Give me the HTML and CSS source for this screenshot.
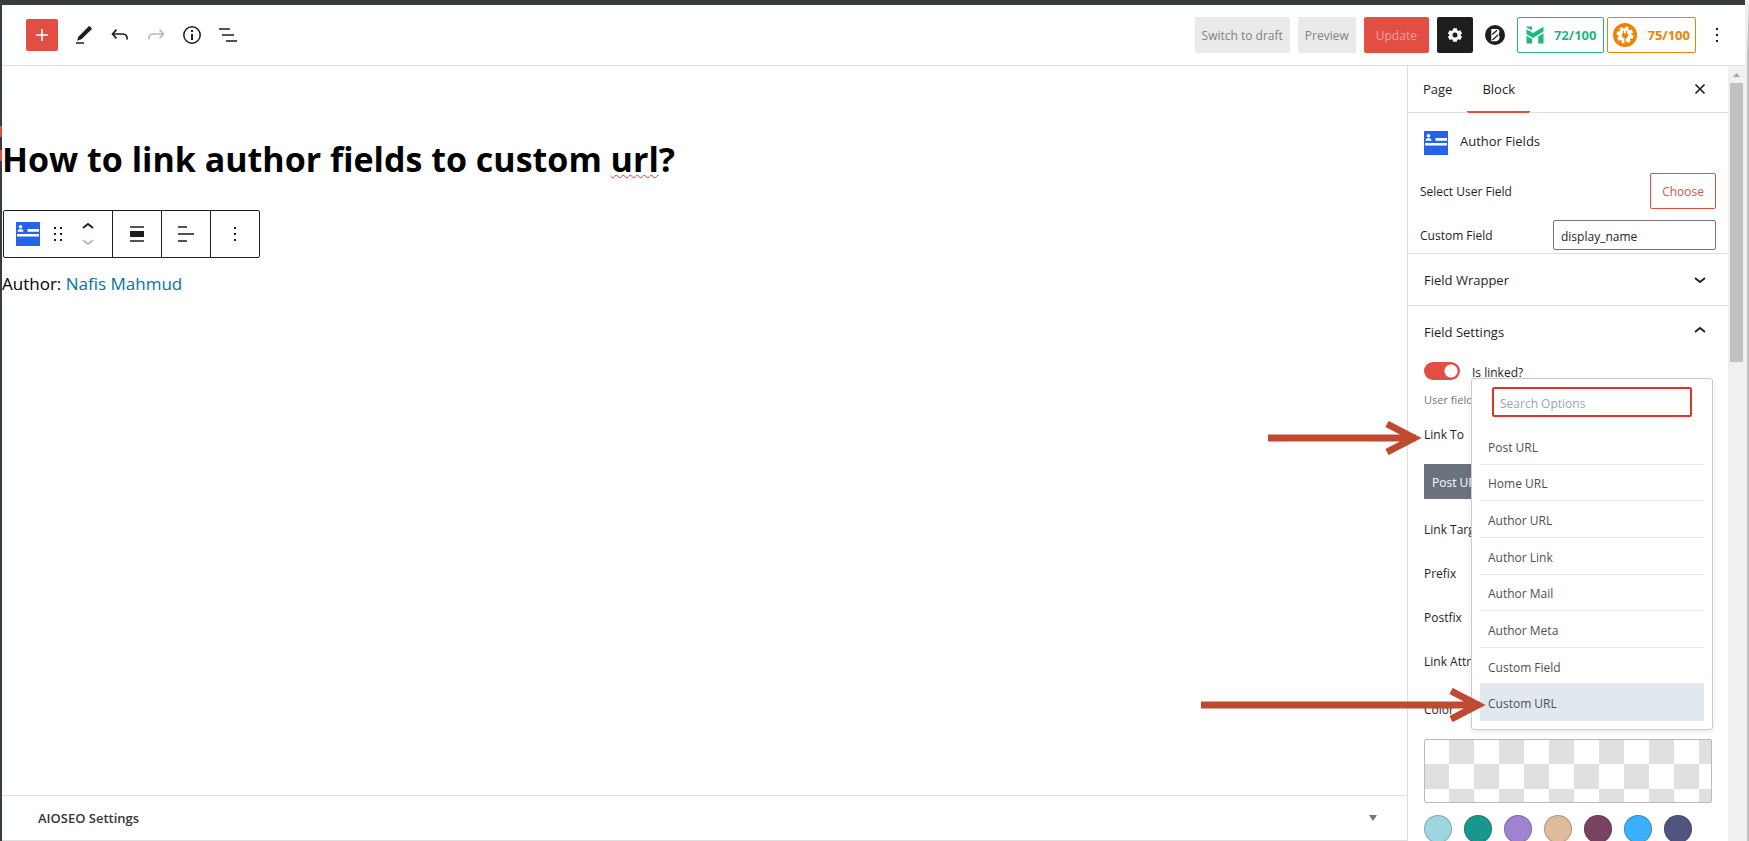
FILE: index.html
```html
<!DOCTYPE html>
<html lang="en">
<head>
<meta charset="utf-8">
<title>Edit Page</title>
<link rel="stylesheet" href="styles.css">
</head>
<body>
<svg class="defs" aria-hidden="true">
  <symbol id="author-icon" viewBox="0 0 24 24">
    <rect width="24" height="24" fill="#2563eb"/>
    <circle cx="4.5" cy="4.7" r="1.8" fill="#fff"/>
    <path d="M1.500 9.800c0-3.600 6-3.600 6 0z" fill="#fff"/>
    <path d="M11.500 7H23v2.800H11.500zM1 12h22v2.500H1z" fill="#fff"/>
  </symbol>
  <symbol id="down" viewBox="0 0 24 24"><path d="M7 10l5 4 5-4" fill="none" stroke="currentColor" stroke-width="1.800"/></symbol>
  <symbol id="up" viewBox="0 0 24 24"><path d="M7 14l5-4 5 4" fill="none" stroke="currentColor" stroke-width="1.800"/></symbol>
  <symbol id="more" viewBox="0 0 24 24"><path d="M11 5h2v2h-2zM11 11h2v2h-2zM11 17h2v2h-2z" fill="currentColor"/></symbol>
</svg>
<div class="frame">
  <div class="app">
    <header class="header">
      <div class="tools">
        <button class="add" aria-label="Add block"><svg viewBox="0 0 24 24"><path d="M12 6v12M6 12h12" stroke="currentColor" stroke-width="1.600"/></svg></button>
        <button class="icon-btn" aria-label="Tools"><svg viewBox="0 0 24 24"><path d="M17.300 2.800l2.900 2.900-10.700 10.600L5 17.700l1.400-4z" fill="currentColor"/><path d="M4 20h8" stroke="currentColor" stroke-width="1.500"/></svg></button>
        <button class="icon-btn" aria-label="Undo"><svg viewBox="0 0 24 24"><path d="M8.500 6.700L4.500 11l4 4.300M4.500 11H15c3 0 4.200 1.500 4.200 5.500" fill="none" stroke="currentColor" stroke-width="1.700"/></svg></button>
        <button class="icon-btn" aria-label="Redo" disabled><svg viewBox="0 0 24 24"><path d="M15.500 6.700l4 4.300-4 4.300M19.500 11H9c-3 0-4.200 1.500-4.200 5.500" fill="none" stroke="currentColor" stroke-width="1.700"/></svg></button>
        <button class="icon-btn" aria-label="Details"><svg viewBox="0 0 24 24"><circle cx="12" cy="12" r="8.200" fill="none" stroke="currentColor" stroke-width="1.500"/><path d="M11 7h2v2h-2zM11 11h2v6h-2z" fill="currentColor"/></svg></button>
        <button class="icon-btn" aria-label="List view"><svg viewBox="0 0 24 24"><path d="M3 6h11M6 12h12M10 18h11" stroke="currentColor" stroke-width="1.600"/></svg></button>
      </div>
      <div class="actions">
        <button class="btn muted">Switch to draft</button>
        <button class="btn muted">Preview</button>
        <button class="btn update">Update</button>
        <button class="btn gear" aria-label="Settings"><svg viewBox="0 0 24 24"><path fill="currentColor" fill-rule="evenodd" d="M9.800 4h4.400l.5 2.300 1.300.8 2.300-.8 2.200 3.700-1.700 1.600v1l1.700 1.600-2.200 3.700-2.300-.8-1.300.8-.5 2.300H9.800l-.5-2.300-1.300-.8-2.300.8-2.200-3.700 1.700-1.600v-1L3.500 10l2.200-3.700 2.300.8 1.300-.8zM12 9a3 3 0 1 0 0 6 3 3 0 0 0 0-6z"/></svg></button>
        <button class="brand" aria-label="Page builder"><svg viewBox="0 0 20 20"><circle cx="10" cy="10" r="10" fill="currentColor"/><path d="M6.300 4h5.500c2.700 0 3.500 3 1.700 5.200 2.300 2.800.8 7-2.500 7H6.300z" fill="#fff"/><path d="M7.300 9.500L12 5.300M7.500 15l5.500-5" stroke="#1e1e1e" stroke-width="1.300"/></svg></button>
        <div class="scores">
          <button class="btn score green"><svg viewBox="0 0 18 18"><path fill="currentColor" d="M.500.500H6v3.700L.500 1.500zM.500 3.200L7 7l10.500-6.300v4.800L7 12 .500 8.200zM.500 9.800L6 13v4.500H.500zM12.200 10.500l5.300-3.300v10.300h-5.300z"/></svg>72/100</button>
          <button class="btn score orange"><svg viewBox="0 0 24 24"><circle cx="12" cy="12" r="12" fill="currentColor"/><circle cx="12" cy="12" r="6.700" fill="#fff"/><circle cx="12" cy="12" r="7.200" fill="none" stroke="#fff" stroke-width="2.500" stroke-dasharray="3.300 2.355"/><path d="M10.500 8v3M13.500 8v3M12 14v6" stroke="currentColor" stroke-width="1.200"/><path d="M9 10.500h6v2.300c0 1.500-1.200 2.500-3 2.500s-3-1-3-2.500z" fill="currentColor"/></svg>75/100</button>
        </div>
        <button class="options" aria-label="Options"><svg viewBox="0 0 24 24"><use href="#more"/></svg></button>
      </div>
    </header>
    <div class="body">
      <main class="editor">
        <div class="canvas">
          <h1 class="title">How to link author fields to custom <span class="misspelt">url</span>?</h1>
          <div class="toolbar" role="toolbar" aria-label="Block tools">
            <div class="group lead">
              <button aria-label="Author Fields"><svg viewBox="0 0 24 24"><use href="#author-icon"/></svg></button>
              <button class="drag" aria-label="Drag"><svg viewBox="0 0 12 24"><path d="M2 5h2v2H2zM8 5h2v2H8zM2 11h2v2H2zM8 11h2v2H8zM2 17h2v2H2zM8 17h2v2H8z" fill="currentColor"/></svg></button>
              <div class="movers">
                <button aria-label="Move up"><svg viewBox="0 4 24 16"><use href="#up" width="24" height="24"/></svg></button>
                <button aria-label="Move down" disabled><svg viewBox="0 4 24 16"><use href="#down" width="24" height="24"/></svg></button>
              </div>
            </div>
            <button class="group" aria-label="Align"><svg viewBox="0 0 24 24"><path d="M5 5h14M5 19h14" stroke="#50555a" stroke-width="2"/><path d="M5 9h14v6H5z" fill="currentColor"/></svg></button>
            <button class="group" aria-label="Align text"><svg viewBox="0 0 24 24"><path d="M4 5h9M4 12h16M4 19h9" stroke="#50555a" stroke-width="1.800"/></svg></button>
            <button class="group" aria-label="More"><svg viewBox="0 0 24 24"><use href="#more"/></svg></button>
          </div>
          <p class="author">Author: <a href="#author">Nafis Mahmud</a></p>
        </div>
        <button class="metabox">AIOSEO Settings<svg viewBox="0 0 8 6"><path d="M0 0h8L4 6z" fill="currentColor"/></svg></button>
      </main>
      <aside class="sidebar">
        <div class="panel">
          <div class="tabs">
            <button class="tab">Page</button>
            <button class="tab active">Block</button>
            <button class="close" aria-label="Close"><svg viewBox="0 0 24 24"><path d="M7.500 7.500l9 9M16.500 7.500l-9 9" stroke="currentColor" stroke-width="1.700"/></svg></button>
          </div>
          <div class="card"><svg viewBox="0 0 24 24"><use href="#author-icon"/></svg><h2>Author Fields</h2></div>
          <div class="fields">
            <div class="row"><span>Select User Field</span><button class="btn choose">Choose</button></div>
            <div class="row"><label for="custom">Custom Field</label><input id="custom" class="text" type="text" value="display_name"></div>
          </div>
          <button class="section">Field Wrapper<svg viewBox="0 0 24 24"><use href="#down"/></svg></button>
          <button class="section open">Field Settings<svg viewBox="0 0 24 24"><use href="#up"/></svg></button>
          <div class="settings">
            <label class="switch"><input type="checkbox" checked><span>Is linked?</span></label>
            <p class="help">User field</p>
            <div class="line">Link To</div>
            <button class="current">Post URL</button>
            <div class="rows">
              <div>Link Target</div>
              <div>Prefix</div>
              <div>Postfix</div>
              <div>Link Attr</div>
            </div>
            <div class="color">Color</div>
            <button class="checker" aria-label="Custom color"></button>
            <div class="swatches">
              <button class="c1" aria-label="Light cyan"></button>
              <button class="c2" aria-label="Teal"></button>
              <button class="c3" aria-label="Purple"></button>
              <button class="c4" aria-label="Tan"></button>
              <button class="c5" aria-label="Plum"></button>
              <button class="c6" aria-label="Blue"></button>
              <button class="c7" aria-label="Indigo"></button>
            </div>
            <div class="popup">
              <input class="search" type="text" placeholder="Search Options" aria-label="Search Options">
              <ul>
                <li><button>Post URL</button></li>
                <li><button>Home URL</button></li>
                <li><button>Author URL</button></li>
                <li><button>Author Link</button></li>
                <li><button>Author Mail</button></li>
                <li><button>Author Meta</button></li>
                <li><button>Custom Field</button></li>
                <li class="selected"><button>Custom URL</button></li>
              </ul>
            </div>
          </div>
        </div>
        <div class="scroll"><svg viewBox="0 0 17 17"><path d="M5 11l3.500-4 3.500 4z" fill="#a3a3a3"/></svg><span class="thumb"></span></div>
        <svg class="arrow first" viewBox="0 0 154 34"><path d="M0 17h148M119 3l27 14-27 14"/></svg>
        <svg class="arrow second" viewBox="0 0 285 34"><path d="M0 17h279M250 3l27 14-27 14"/></svg>
      </aside>
    </div>
  </div>
  <div class="edge"></div>
  <div class="marks"><span></span><span></span></div>
</div>
</body>
</html>
```
FILE: styles.css
```css
* { box-sizing: border-box; }
body { margin: 0; font: 12px/20px "Open Sans", "Noto Sans", sans-serif; color: #1e1e1e; }
button, input { font: inherit; color: inherit; margin: 0; }
button { background: none; border: 0; padding: 0; display: flex; align-items: center; justify-content: center; }
svg { display: block; flex: none; width: 24px; height: 24px; }
h1, h2, p, ul { margin: 0; padding: 0; }
.defs { position: absolute; width: 0; height: 0; }
.frame { position: relative; display: flex; height: 100vh; overflow: hidden; background: #373c40; padding-left: 2px; }
.app { flex: 1; min-width: 0; display: flex; flex-direction: column; border-top: 5px solid #373c40; background: #fff; }
.edge { width: 4px; background: #f0f0f0; border-top: 55px solid #f0f0f0; border-right: 2px solid #c1c1c1; }
.marks { position: absolute; left: 0; top: 126px; width: 2px; display: grid; gap: 13px; }
.marks span { height: 11px; background: #e24e43; }

.header { display: flex; justify-content: space-between; align-items: center; height: 61px; padding: 0 16px 0 24px; border-bottom: 1px solid #ddd; }
.tools, .actions { display: flex; align-items: center; }
.add { width: 32px; height: 32px; margin-right: 8px; border-radius: 2px; background: #e24e43; color: #fff; }
.icon-btn { width: 36px; height: 36px; }
button:disabled { color: #bbb; }
.actions { gap: 8px; }
.btn { height: 36px; border-radius: 2px; padding: 0 6px; white-space: nowrap; }
.muted { background: #eaeaea; color: #828282; padding: 1px 7px 0; }
.update { background: #e24e43; color: #f3a19b; padding: 1px 12px 0; }
.gear { width: 36px; background: #1e1e1e; color: #fff; }
.gear svg { width: 20px; height: 20px; }
.brand { width: 28px; height: 36px; }
.brand svg { width: 20px; height: 20px; }
.scores { display: flex; gap: 3px; }
.score { border: 1px solid; font-size: 13px; font-weight: 700; gap: 10px; }
.green { color: #1db880; padding: 0 7px 0 8px; }
.green svg { width: 18px; height: 18px; }
.orange { color: #f18200; padding: 0 5px; }
.options { width: 24px; margin-left: 1px; }

.body { flex: 1; min-height: 0; display: flex; }
.editor { flex: 1; min-width: 0; display: flex; flex-direction: column; }
.canvas { flex: 1; padding: 69px 0 0; }
.title { font-size: 34px; line-height: 48px; font-weight: 700; color: #000; }
.misspelt { text-decoration: underline wavy #e33 1px; text-underline-offset: 2px; text-decoration-skip-ink: none; }
.toolbar { display: inline-flex; height: 48px; margin: 27px 0 0 1px; border: 1px solid #1e1e1e; border-radius: 2px; }
.group { width: 49px; display: flex; align-items: center; justify-content: center; }
.group + .group { border-left: 1px solid #1e1e1e; }
.lead { width: 108px; justify-content: flex-start; padding-left: 12px; }
.drag { margin-left: 12px; }
.drag svg { width: 12px; }
.movers { margin-left: 12px; }
.movers svg { height: 16px; }
.author { margin-top: 10px; font-size: 17px; line-height: 32px; color: #000; }
.author a { color: #0073aa; text-decoration: none; }
.metabox { justify-content: space-between; width: 100%; height: 46px; padding: 0 30px 0 36px; border-top: 1px solid #ddd; border-bottom: 1px solid #ddd; color: #32373c; font-size: 13px; font-weight: 600; }
.metabox svg { width: 8px; height: 6px; color: #72777c; }

.sidebar { position: relative; flex: none; width: 338px; display: flex; border-left: 1px solid #ddd; }
.panel { flex: 1; min-width: 0; overflow: hidden; }
.tabs { display: flex; height: 47px; border-bottom: 1px solid #ddd; }
.tab { padding: 0 15px; font-size: 13px; }
.active { box-shadow: 0 2px 0 -1px #e24e43, inset 0 -1px 0 #e24e43; }
.close { margin-left: auto; width: 24px; margin-right: 16px; }
.card { display: flex; align-items: flex-start; gap: 12px; padding: 18px 16px; }
.card h2 { font-size: 13px; line-height: 20px; font-weight: 400; }
.fields { display: grid; gap: 11px; padding: 0 12px 3px; }
.row { display: flex; justify-content: space-between; align-items: center; line-height: 22px; }
.row span, .row label { padding-top: 2px; }
.choose { border: 1px solid #e24e43; color: #e24e43; padding: 1px 11px 0; }
.text { width: 163px; height: 30px; border: 1px solid #757575; border-radius: 2px; padding: 2px 7px 0; }
.section { width: 100%; height: 52px; justify-content: space-between; padding: 1px 16px 0; border-top: 1px solid #ddd; font-size: 13px; }
.open svg { margin-bottom: 4px; }
.settings { position: relative; padding: 4px 16px 0; }
.switch { display: flex; align-items: center; gap: 12px; height: 20px; }
.switch span { padding-top: 3px; }
.switch input { appearance: none; width: 36px; height: 18px; border-radius: 9px; background: radial-gradient(circle at 27px 9px, #fff 6px, #e24e43 7px); }
.help { margin-top: 10px; line-height: 18px; color: #757575; font-size: 11px; }
.line { margin-top: 16px; }
.current { width: 80px; height: 35px; margin: 19px 0 9px; background: #6b7280; color: #fff; padding: 2px 0 0 8px; justify-content: flex-start; }
.rows { display: grid; line-height: 44px; }
.color { margin-top: 16px; }
.checker { width: 100%; height: 64px; margin-top: 19px; border: 1px solid #bbb; border-radius: 2px; background: repeating-conic-gradient(#e0e0e0 0 25%, #fff 0 50%) border-box 0 0 / 50px 50px; }
.swatches { display: flex; gap: 12px; margin-top: 12px; }
.swatches button { width: 28px; height: 28px; border-radius: 50%; border: 1px solid rgba(0, 0, 0, .2); }
.c1 { background: #9dd6df; }
.c2 { background: #18978f; }
.c3 { background: #a084cf; }
.c4 { background: #dfbb9d; }
.c5 { background: #774360; }
.c6 { background: #3ab0ff; }
.c7 { background: #51557e; }
.popup { position: absolute; left: 63px; right: 15px; top: 21px; padding: 8px; background: #fff; border: 1px solid #ccc; border-radius: 3px; box-shadow: 0 2px 6px rgba(0, 0, 0, .08); color: #4b5058; }
.search { display: block; width: 200px; height: 30px; margin: 0 12px 11px; border: 2px solid #e0342b; border-radius: 2px; padding: 2px 6px 0; outline: 0; }
.search::placeholder { color: #9ca3af; opacity: 1; }
.popup ul { list-style: none; display: grid; grid-auto-rows: 1fr; min-height: 293px; }
.popup li { display: flex; border-bottom: 1px solid #e5e7eb; }
.popup li button { flex: 1; justify-content: flex-start; padding: 4px 8px 0; }
.popup .selected { background: #e2e8f0; border-color: #e2e8f0; }
.scroll { flex: none; width: 17px; background: #f0f0f0; }
.scroll svg { width: 17px; height: 17px; }
.thumb { display: block; width: 13px; height: 279px; margin: 0 2px; background: #c1c1c1; }
.arrow { position: absolute; height: 34px; fill: none; stroke: #bf4a32; stroke-width: 7; }
.first { width: 154px; right: 323px; top: 355px; }
.second { width: 285px; right: 259px; top: 622px; }
```
